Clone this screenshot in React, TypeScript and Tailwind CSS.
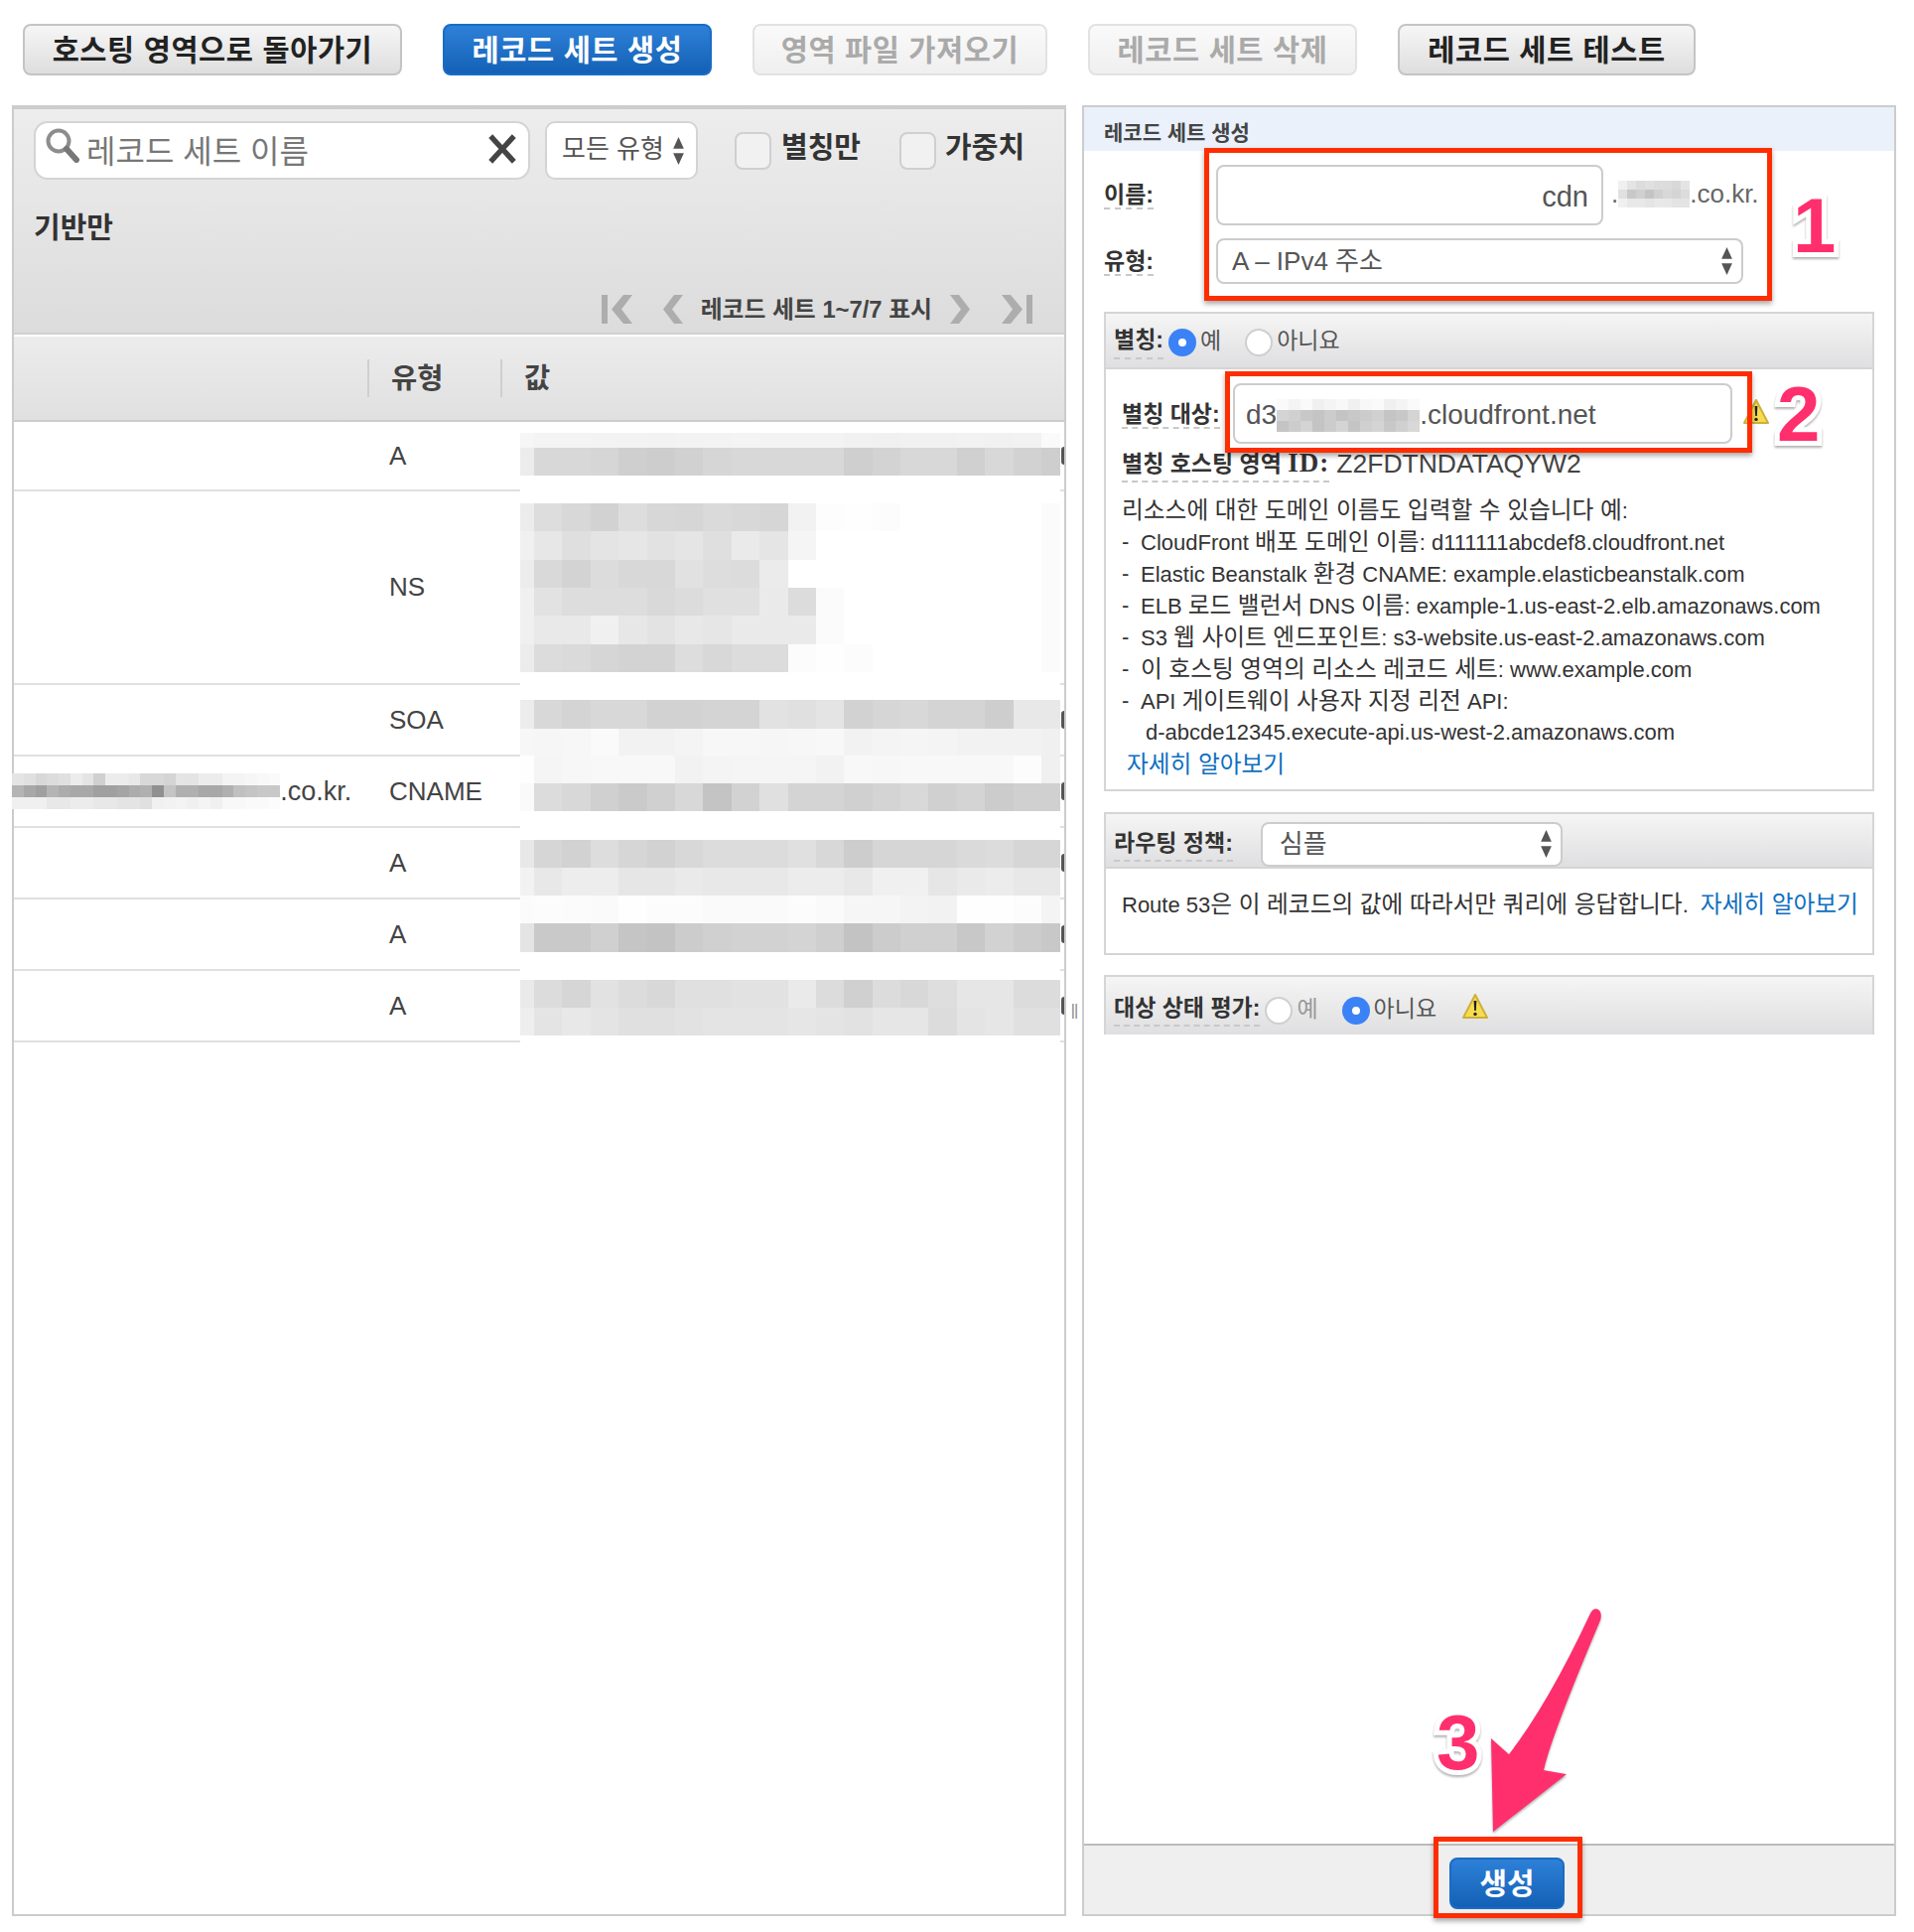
import type { ReactNode } from 'react';

// blurred (redacted) text is kept as rows of grey levels, two hex digits per cell
function Pixels({ rows, cell, rowClass }: { rows: string[]; cell: string; rowClass: string }) {
  return (
    <div className="flex flex-col shrink-0">
      {rows.map((row, i) => (
        <div key={i} className={`flex ${rowClass}`}>
          {row.split(' ').map((g, j) => (
            <div key={j} className={`${cell} shrink-0`} style={{ backgroundColor: `#${g}${g}${g}` }} />
          ))}
        </div>
      ))}
    </div>
  );
}

function ValueRow({ cells, className }: { cells: string; className: string }) {
  const [first, ...rest] = cells.split(' ');
  return (
    <div className={`flex overflow-hidden ${className}`}>
      <div className="w-[14px] shrink-0" style={{ backgroundColor: `#${first}${first}${first}` }} />
      {rest.map((g, i) => (
        <div key={i} className="w-[28.4px] shrink-0" style={{ backgroundColor: `#${g}${g}${g}` }} />
      ))}
    </div>
  );
}

// hangul runs sit a bit larger than the latin text around them
function Ko({ text }: { text: string }) {
  const parts = text.split(/([가-힣]+(?: [가-힣]+)*)/);
  return (
    <>
      {parts.map((p, i) => (i % 2 === 1 ? <span key={i} className="text-[23.7px]">{p}</span> : <span key={i}>{p}</span>))}
    </>
  );
}

function TopButton({ w, kind, children }: { w: string; kind: 'normal' | 'primary' | 'disabled'; children: ReactNode }) {
  const styles = {
    normal: 'bg-linear-to-b from-[#f6f6f6] to-[#dedede] border-[#c4c4c4] text-[#222]',
    primary: 'bg-linear-to-b from-[#2e80d8] to-[#1261b6] border-[#1a6cc4] text-white',
    disabled: 'bg-linear-to-b from-[#fafafa] to-[#efefef] border-[#e2e2e2] text-[#aaa]',
  }[kind];
  return (
    <div className={`${w} h-[52px] rounded-[8px] border-2 flex items-center justify-center text-[29.5px] font-bold tracking-[0.6px] pt-[2px] ${styles}`}>
      {children}
    </div>
  );
}

function Updown({ className }: { className: string }) {
  return (
    <svg className={className} viewBox="0 0 12 28" fill="#555">
      <path d="M6 1 L11 12 H1 Z" />
      <path d="M6 27 L11 16 H1 Z" />
    </svg>
  );
}

function Warn({ className }: { className: string }) {
  return (
    <svg className={className} viewBox="0 0 28 28">
      <path d="M14 2 L26 25 H2 Z" fill="#f7dc4f" stroke="#cdb03a" strokeWidth="2" strokeLinejoin="round" />
      <path d="M12.6 8 H15.4 L14.8 18 H13.2 Z" fill="#222" />
      <circle cx="14" cy="21.4" r="1.7" fill="#222" />
    </svg>
  );
}

function Radio({ on }: { on?: boolean }) {
  return on ? (
    <div className="w-[28px] h-[28px] rounded-full bg-[#3b82f6] flex items-center justify-center shrink-0">
      <div className="w-[8px] h-[8px] rounded-full bg-white" />
    </div>
  ) : (
    <div className="w-[28px] h-[28px] rounded-full bg-white border-2 border-[#cfcfcf] shrink-0" />
  );
}

function Label({ children, className = '' }: { children: ReactNode; className?: string }) {
  return (
    <span className={`font-bold text-[#333] border-b-2 border-dashed border-[#c8c8c8] whitespace-nowrap ${className}`}>{children}</span>
  );
}

function Pager({ dir, bar }: { dir: 'l' | 'r'; bar?: boolean }) {
  const flip = dir === 'r' ? '-scale-x-100' : '';
  return (
    <svg className={`${bar ? 'w-[31px]' : 'w-[20px]'} h-[29px] ${flip}`} viewBox={bar ? '0 0 31 29' : '0 0 20 29'} fill="#adadad">
      {bar ? <rect x="0" y="0" width="6" height="29" /> : null}
      <path d={bar ? 'M22 0 H31 L20 14.5 L31 29 H22 L10 14.5 Z' : 'M11 0 H20 L9 14.5 L20 29 H11 L0 14.5 Z'} />
    </svg>
  );
}

const typeRows = [
  { h: 'h-[70px]', t: 'A', cut: true },
  { h: 'h-[195px]', t: 'NS' },
  { h: 'h-[72px]', t: 'SOA', cut: true },
  { h: 'h-[72px]', t: 'CNAME', name: true, cut: true },
  { h: 'h-[72px]', t: 'A', cut: true },
  { h: 'h-[72px]', t: 'A', cut: true },
  { h: 'h-[72px]', t: 'A', cut: true },
];

const hints = [
  'CloudFront 배포 도메인 이름: d111111abcdef8.cloudfront.net',
  'Elastic Beanstalk 환경 CNAME: example.elasticbeanstalk.com',
  'ELB 로드 밸런서 DNS 이름: example-1.us-east-2.elb.amazonaws.com',
  'S3 웹 사이트 엔드포인트: s3-website.us-east-2.amazonaws.com',
  '이 호스팅 영역의 리소스 레코드 세트: www.example.com',
  'API 게이트웨이 사용자 지정 리전 API:',
];

const numberClass =
  "absolute font-bold text-[#ff2f6d] text-[78px] leading-none [-webkit-text-stroke:10px_white] [paint-order:stroke_fill] [filter:drop-shadow(0_2px_1px_rgba(0,0,0,0.3))]";
const redBox = 'absolute border-[5px] border-[#ff2d00] shadow-[0_3px_5px_rgba(0,0,0,0.35)]';

export default function App() {
  return (
    <div className="relative w-[1928px] h-[1946px] bg-white overflow-hidden text-[#444] [font-family:'Liberation_Sans','Noto_Sans_CJK_KR',sans-serif]">
      <div className="flex gap-[41px] pl-[23px] pt-[24px]">
        <TopButton w="w-[382px]" kind="normal">호스팅 영역으로 돌아가기</TopButton>
        <TopButton w="w-[271px]" kind="primary">레코드 세트 생성</TopButton>
        <TopButton w="w-[297px]" kind="disabled">영역 파일 가져오기</TopButton>
        <TopButton w="w-[271px]" kind="disabled">레코드 세트 삭제</TopButton>
        <TopButton w="w-[300px]" kind="normal">레코드 세트 테스트</TopButton>
      </div>

      <div className="flex pl-[12px] mt-[30px]">
        {/* left: record list */}
        <div className="w-[1062px] h-[1824px] border-x-2 border-b-2 border-t-4 border-[#ccc] flex flex-col">
          <div className="h-[227px] bg-linear-to-b from-[#ededed] to-[#dcdcdc] border-b-2 border-[#d0d0d0] pl-[20px] pt-[12px] flex flex-col">
            <div className="flex items-center">
              <div className="w-[500px] h-[59px] bg-white rounded-[14px] border-2 border-[#d4d4d4] flex items-center pl-[9px] pr-[10px]">
                <svg className="w-[36px] h-[36px] shrink-0 -mt-[12px]" viewBox="0 0 36 36" fill="none">
                  <circle cx="14" cy="14" r="10.5" stroke="#8d8d8d" strokeWidth="4" />
                  <path d="M22 22 L32 33" stroke="#777" strokeWidth="6" strokeLinecap="round" />
                </svg>
                <span className="text-[32px] text-[#777] ml-[6px] mt-[2px]">레코드 세트 이름</span>
                <svg className="w-[30px] h-[30px] ml-auto mr-[1px] -mt-[4px]" viewBox="0 0 28 28">
                  <path d="M3 2 L25 26 M25 2 L3 26" stroke="#444" strokeWidth="5" />
                </svg>
              </div>
              <div className="w-[154px] h-[59px] ml-[15px] bg-white rounded-[10px] border-2 border-[#d4d4d4] flex items-center pl-[15px]">
                <span className="text-[26px] text-[#555] -mt-[3px]">모든 유형</span>
                <Updown className="w-[13px] h-[30px] ml-[8px]" />
              </div>
              <div className="w-[37px] h-[38px] ml-[37px] rounded-[8px] border-2 border-[#cfcfcf] bg-[#f1f1f1]" />
              <span className="text-[29px] font-bold text-[#333] ml-[10px] -mt-[3px]">별칭만</span>
              <div className="w-[37px] h-[38px] ml-[39px] rounded-[8px] border-2 border-[#cfcfcf] bg-[#f1f1f1]" />
              <span className="text-[29px] font-bold text-[#333] ml-[9px] -mt-[3px]">가중치</span>
            </div>
            <div className="text-[29px] font-bold text-[#333] mt-[31px] leading-[36px]">기반만</div>
            <div className="flex items-center mt-[46px] pr-[32px] justify-end">
              <Pager dir="l" bar />
              <div className="ml-[31px]"><Pager dir="l" /></div>
              <span className="text-[23.8px] font-bold text-[#444] mx-[18px]">레코드 세트 1~7/7 표시</span>
              <Pager dir="r" />
              <div className="ml-[32px]"><Pager dir="r" bar /></div>
            </div>
          </div>

          <div className="h-[86px] mt-[2px] bg-linear-to-b from-[#ececec] to-[#e0e0e0] border-b-2 border-[#ccc] flex items-center">
            <div className="w-[358px] h-[38px] border-r-2 border-[#cfcfcf]" />
            <div className="w-[134px] h-[38px] border-r-2 border-[#cfcfcf] pl-[22px] text-[28.5px] font-bold leading-[38px] text-[#444]">유형</div>
            <div className="pl-[22px] text-[28.5px] font-bold text-[#444]">값</div>
          </div>

          <div className="flex">
            <div className="w-[510px] shrink-0">
              {typeRows.map((r, i) => (
                <div key={i} className={`${r.h} border-b-2 border-[#e0e0e0] flex items-center`}>
                  <div className="w-[380px] shrink-0 flex items-center -ml-[2px]">
                    {r.name ? (
                      <>
                        <Pixels
                          cell="w-[11.75px]"
                          rowClass="h-[12px]"
                          rows={[
                            'e4 e0 d8 dc e0 ec e4 d0 ec ec e8 d8 d8 d4 e4 e4 ec ec f4 f4 f6 f8 fa',
                            'b4 a8 a0 b4 ac a8 a8 a0 a0 a4 ac b0 90 c4 b0 b0 a8 a8 b0 c0 c4 c8 c8',
                            'f0 f0 f0 e8 e8 ec ec e8 e8 e4 e4 e0 f0 f2 f4 f0 f4 f0 f8 f8 fa fa fc',
                          ]}
                        />
                        <span className="text-[27px]">.co.kr.</span>
                      </>
                    ) : null}
                  </div>
                  <span className="text-[26px]">{r.t}</span>
                </div>
              ))}
            </div>
            <div className="w-[544px] overflow-hidden flex flex-col">
              <ValueRow className="h-[15px] mt-[11px]" cells="f6 f4 f4 f3 f3 f2 f3 f3 f4 f3 f3 f3 f1 f0 f1 f1 f2 f1 f2 fa" />
              <ValueRow className="h-[28px]" cells="ec d8 d8 d6 cf cd d1 d6 d8 d8 d8 d8 cf d3 d8 d8 d0 d8 d2 ce" />
              <ValueRow className="h-[28px] mt-[28px]" cells="ec dd d8 d2 dd d7 d6 da d8 d6 f2 fd fe fc ff ff ff ff ff fb" />
              <ValueRow className="h-[29px]" cells="f0 e7 df e4 e6 e2 e5 df ea e5 f5 ff ff ff ff ff ff ff ff fb" />
              <ValueRow className="h-[28px]" cells="ec d9 d3 dc d8 d8 e1 dd dc eb ff ff ff ff ff ff ff ff ff fb" />
              <ValueRow className="h-[28px]" cells="f0 e2 dd dd dd d9 dc e0 e0 ea dc fb ff ff ff ff ff ff ff fb" />
              <ValueRow className="h-[29px]" cells="f0 e9 e9 f0 e7 e3 e8 e6 ea ea ea fb ff ff ff ff ff ff ff fb" />
              <ValueRow className="h-[28px]" cells="ec dc da d6 d3 d3 dd d8 dc dc fc fe fc ff ff ff ff ff ff fb" />
              <ValueRow className="h-[29px] mt-[28px]" cells="ec d8 d4 d8 d8 d2 d2 d4 d4 e2 e0 e4 d2 d6 d8 d4 d4 ce e8 e8" />
              <ValueRow className="h-[27px]" cells="f7 f6 f7 fa f2 f2 f4 f7 f7 f6 f7 f8 f2 f4 f5 f4 f2 f2 f2 f0" />
              <ValueRow className="h-[28px]" cells="fe f5 f7 f8 f8 f8 f2 f4 f5 f5 f5 f2 f8 f7 f8 f8 f8 f8 fc f0" />
              <ValueRow className="h-[28px]" cells="fa dc d8 d0 ca d0 d8 c4 d2 e0 d4 d4 d0 d4 d8 d0 d4 cc d0 d0" />
              <ValueRow className="h-[28px] mt-[29px]" cells="e8 d6 d2 dd d6 d2 d8 dc dc dc e0 d8 cd d6 d6 d6 da dc d6 d6" />
              <ValueRow className="h-[28px]" cells="f2 e8 ed ed e6 e6 ea e8 e8 e8 ec ec e8 f0 f0 e6 ea ec e8 e8" />
              <ValueRow className="h-[28px]" cells="fb fc fb fa fe fc fc fa fa fa fc fa f6 f6 f3 f2 fe fe fc f4" />
              <ValueRow className="h-[29px]" cells="e4 c9 c9 d0 c5 c3 cc d0 d2 d2 d4 cf c3 cc d0 d0 c8 d2 cc c8" />
              <ValueRow className="h-[28px] mt-[28px]" cells="ea dc d6 e2 dc d8 e0 e0 e2 e2 ea dc d0 dc d8 de e6 e6 dc dc" />
              <ValueRow className="h-[28px]" cells="ee e4 e8 e4 e0 e0 e2 e4 e4 e4 e6 e4 e2 e6 e6 dc e4 e6 e0 e0" />
            </div>
            {/* clipped first letters of the next column */}
            <div className="w-[4px] shrink-0">
              {typeRows.map((r, i) => (
                <div key={i} className={`${r.h} border-b-2 border-[#e0e0e0] flex items-center justify-end`}>
                  {r.cut ? <div className="w-[3px] h-[18px] rounded-l-full bg-[#555]" /> : null}
                </div>
              ))}
            </div>
          </div>
        </div>

        <div className="w-[16px] flex items-center justify-center text-[16px] text-[#888] tracking-[-1px]">||</div>

        {/* right: create record set */}
        <div className="w-[820px] h-[1824px] border-2 border-[#ccc] flex flex-col">
          <div className="h-[44px] bg-[#eaf1fb] pl-[20px] text-[21px] font-bold text-[#444] leading-[52px]">레코드 세트 생성</div>

          <div className="pl-[20px] pt-[14px]">
            <div className="flex items-center">
              <div className="w-[113px] text-[23px]"><Label>이름:</Label></div>
              <div className="w-[390px] h-[61px] rounded-[8px] border-2 border-[#ccc] flex items-center justify-end pr-[13px] text-[29px] text-[#555] pt-[5px]">cdn</div>
              <span className="text-[26px] text-[#666] ml-[8px] flex items-center -mt-[3px]">
                .
                <Pixels
                  cell="w-[9px]"
                  rowClass="h-[9px]"
                  rows={['f0 e4 dc e0 dc dc d8 e4', 'e0 c8 d0 c4 d0 d8 d4 dc', 'f0 e8 e8 e4 e8 e8 e4 e4']}
                />
                .co.kr.
              </span>
            </div>
            <div className="flex items-center mt-[13px]">
              <div className="w-[113px] text-[23px]"><Label>유형:</Label></div>
              <div className="w-[531px] h-[46px] rounded-[8px] border-2 border-[#ccc] flex items-center pl-[14px] pr-[8px] text-[26px] text-[#555]">
                A – IPv4 주소
                <Updown className="w-[13px] h-[30px] ml-auto" />
              </div>
            </div>
          </div>

          <div className="w-[776px] ml-[20px] mt-[28px] h-[483px] border-2 border-[#d5d5d5] flex flex-col">
            <div className="h-[56px] shrink-0 bg-linear-to-b from-[#f5f5f5] to-[#dfdfe1] border-b-2 border-[#d5d5d5] flex items-center pl-[8px] pt-[1px] text-[23px]">
              <Label>별칭:</Label>
              <div className="ml-[5px] mt-[3px]"><Radio on /></div>
              <span className="ml-[4px] text-[#555]">예</span>
              <div className="ml-[24px] mt-[3px]"><Radio /></div>
              <span className="ml-[4px] text-[#555]">아니요</span>
            </div>
            <div className="pl-[16px] pt-[14px] text-[22px] text-[#333]">
              <div className="flex items-center">
                <div className="w-[112px] text-[23px] mt-[2px]"><Label>별칭 대상:</Label></div>
                <div className="w-[503px] h-[61px] rounded-[8px] border-2 border-[#ccc] flex items-center pl-[11px] pt-[3px] text-[28px] text-[#555]">
                  d3
                  <Pixels
                    cell="w-[12px]"
                    rowClass="h-[11px]"
                    rows={[
                      'fa f4 fa f0 f4 f8 f0 f8 fa f0 f4 fa',
                      'd4 d0 c8 c4 cc c4 c8 cc d0 c4 c8 d4',
                      'c4 cc d4 c4 cc d4 c4 d0 d4 c8 d0 d8',
                    ]}
                  />
                  .cloudfront.net
                </div>
                <Warn className="w-[28px] h-[28px] ml-[10px] -mt-[4px]" />
              </div>
              <div className="flex items-center h-[32px] mt-[5px] text-[23px]">
                <Label>
                  별칭 호스팅 영역 <span className="text-[27px] tracking-[1px] leading-[26px] [font-family:'Liberation_Serif',serif]">ID:</span>
                </Label>
                <span className="ml-[7px] text-[26.5px] text-[#444]">Z2FDTNDATAQYW2</span>
              </div>
              <div className="mt-[14px] leading-[32px] h-[32px] whitespace-nowrap"><Ko text="리소스에 대한 도메인 이름도 입력할 수 있습니다 예:" /></div>
              {hints.map((h) => (
                <div key={h} className="flex leading-[32px] h-[32px] whitespace-nowrap">
                  <span className="w-[19px] shrink-0">-</span>
                  <span><Ko text={h} /></span>
                </div>
              ))}
              <div className="pl-[24px] leading-[32px] h-[32px] whitespace-nowrap">d-abcde12345.execute-api.us-west-2.amazonaws.com</div>
              <div className="pl-[5px] leading-[32px] h-[32px] text-[23.7px] text-[#0f6fc0]">자세히 알아보기</div>
            </div>
          </div>

          <div className="w-[776px] ml-[20px] mt-[21px] h-[144px] border-2 border-[#d5d5d5] flex flex-col">
            <div className="h-[55px] shrink-0 bg-linear-to-b from-[#f5f5f5] to-[#dfdfe1] border-b-2 border-[#d5d5d5] flex items-center pl-[8px] pt-[7px] text-[23px]">
              <Label>라우팅 정책:</Label>
              <div className="w-[304px] h-[45px] ml-[28px] bg-white rounded-[8px] border-2 border-[#ccc] flex items-center pl-[17px] pr-[8px] text-[26px] text-[#555]">
                심플
                <Updown className="w-[13px] h-[30px] ml-auto" />
              </div>
            </div>
            <div className="pl-[16px] pt-[20px] text-[22px] leading-[32px] whitespace-nowrap text-[#333]">
              <Ko text="Route 53은 이 레코드의 값에 따라서만 쿼리에 응답합니다." />
              <span className="ml-[12px] text-[23.7px] text-[#0f6fc0]">자세히 알아보기</span>
            </div>
          </div>

          <div className="w-[776px] ml-[20px] mt-[20px] h-[60px] border-x-2 border-t-2 border-[#d5d5d5] bg-linear-to-b from-[#f5f5f5] to-[#dfdfe1] flex items-center pl-[8px] pt-[6px] text-[23px]">
            <Label>대상 상태 평가:</Label>
            <div className="ml-[5px] mt-[3px]"><Radio /></div>
            <span className="ml-[4px] text-[#999]">예</span>
            <div className="ml-[24px] mt-[3px]"><Radio on /></div>
            <span className="ml-[4px] text-[#555]">아니요</span>
            <Warn className="w-[28px] h-[28px] ml-[25px] -mt-[4px]" />
          </div>

          <div className="mt-auto h-[71px] bg-[#efefef] border-t-2 border-[#bbb] pl-[368px] pt-[12px]">
            <div className="w-[116px] h-[52px] rounded-[8px] bg-linear-to-b from-[#2e80d8] to-[#1261b6] border-2 border-[#1a6cc4] text-white text-[30px] font-bold flex items-center justify-center">
              생성
            </div>
          </div>
        </div>
      </div>

      {/* annotations drawn over the screenshot */}
      <div className={`${redBox} left-[1213px] top-[149px] w-[572px] h-[154px]`} />
      <div className={`${redBox} left-[1234px] top-[374px] w-[531px] h-[82px]`} />
      <div className={`${redBox} left-[1444px] top-[1850px] w-[150px] h-[82px]`} />
      <span className={`${numberClass} left-[1806px] top-[188px]`}>1</span>
      <span className={`${numberClass} left-[1790px] top-[378px]`}>2</span>
      <span className={`${numberClass} left-[1447px] top-[1716px]`}>3</span>
      <svg className="absolute left-[1490px] top-[1610px] w-[130px] h-[245px] [filter:drop-shadow(0_2px_1px_rgba(0,0,0,0.3))]" viewBox="0 0 130 245">
        <path d="M14 235 L12 141 L30 157 Q70 105 112 15 Q116 8 121 12 Q124 15 122 22 Q72 140 65 173 L88 177 Z" fill="#ff2f6d" />
      </svg>
    </div>
  );
}
